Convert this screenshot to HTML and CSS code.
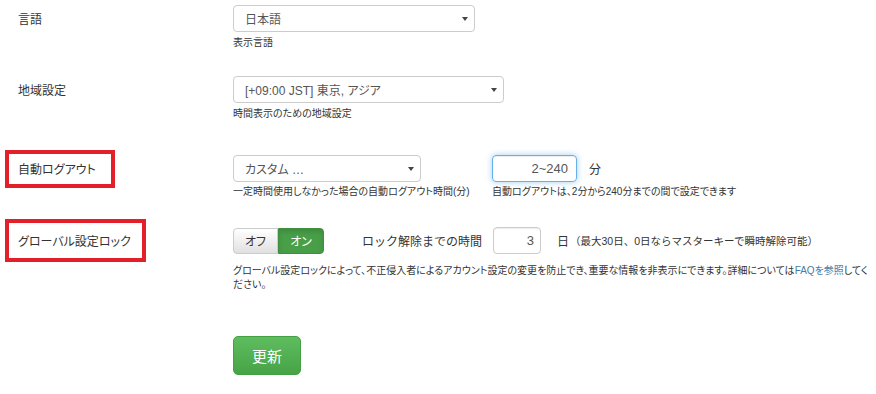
FILE: index.html
```html
<!DOCTYPE html>
<html lang="ja">
<head>
  <meta charset="UTF-8" />
  <meta name="viewport" content="width=device-width, initial-scale=1.0" />
  <title>設定</title>
  <link rel="stylesheet" href="styles.css">
</head>
<body>
  <div class="settings">
    <!-- 言語 -->
    <div class="row row-lang">
      <div class="label"><span>言語</span></div>
      <div class="field">
        <div class="select select-lang">日本語</div>
        <div class="help">表示言語</div>
      </div>
    </div>
    <!-- 地域設定 -->
    <div class="row row-region">
      <div class="label"><span>地域設定</span></div>
      <div class="field">
        <div class="select select-region">[+09:00 JST] 東京, アジア</div>
        <div class="help">時間表示のための地域設定</div>
      </div>
    </div>
    <!-- 自動ログアウト -->
    <div class="row row-logout">
      <div class="label"><span class="marked marked-logout">自動ログアウト</span></div>
      <div class="field field-split">
        <div class="col-select">
          <div class="select select-logout">カスタム …</div>
          <div class="help">一定時間使用しなかった場合の自動ログアウト時間(分)</div>
        </div>
        <div class="col-minutes">
          <div class="inline">
            <div class="input input-focus input-minutes">2~240</div>
            <span class="unit">分</span>
          </div>
          <div class="help">自動ログアウトは、2分から240分までの間で設定できます</div>
        </div>
      </div>
    </div>
    <!-- グローバル設定ロック -->
    <div class="row row-lock">
      <div class="label"><span class="marked marked-lock">グローバル設定ロック</span></div>
      <div class="field">
        <div class="inline">
          <div class="toggle">
            <button class="toggle-btn toggle-off">オフ</button>
            <button class="toggle-btn toggle-on">オン</button>
          </div>
          <span class="lock-label">ロック解除までの時間</span>
          <div class="input input-days">3</div>
          <span class="unit unit-days">日</span>
          <span class="note">（最大30日、0日ならマスターキーで瞬時解除可能）</span>
        </div>
        <p class="desc">グローバル設定ロックによって、不正侵入者によるアカウント設定の変更を防止でき、重要な情報を非表示にできます。詳細については<a href="#">FAQを参照</a>してください。</p>
      </div>
    </div>
    <div class="actions">
      <button class="btn-save">更新</button>
    </div>
  </div>
</body>
</html>
```

FILE: styles.css
```css
* {
  margin: 0;
  padding: 0;
  box-sizing: border-box;
}
body {
  font-family: "Liberation Sans", "Noto Sans CJK JP", sans-serif;
  font-feature-settings: "palt";
  color: #333;
  background: #fff;
  font-size: 12px;
}
.settings {
  padding-top: 5px;
}
/* Rows: label column + field column */
.row {
  display: grid;
  grid-template-columns: 233px 1fr;
}
.row-lang { margin-bottom: 26px; }
.row-region { margin-bottom: 34px; }
.row-logout { margin-bottom: 28px; }
.label {
  height: 27px;
  display: flex;
  align-items: center;
  padding-left: 18px;
  font-size: 12px;
}
/* Red highlight boxes */
.marked {
  display: flex;
  align-items: center;
  margin-left: -13px;
  padding: 0 11px 0 9px;
  border: 4px solid #e3202a;
  flex-shrink: 0;
}
.marked-logout {
  height: 38px;
  padding-right: 15px;
}
.marked-lock { height: 43px; }
/* Selects */
.select {
  height: 27px;
  border: 1px solid #ccc;
  border-radius: 4px;
  background: #fff;
  padding: 0 11px;
  display: flex;
  align-items: center;
  font-size: 12px;
  position: relative;
  color: #555;
}
.select::after {
  content: "";
  position: absolute;
  right: 6px;
  top: 11px;
  border-left: 3px solid transparent;
  border-right: 3px solid transparent;
  border-top: 4px solid #444;
}
.select-lang { width: 242px; }
.select-region { width: 271px; }
.select-logout { width: 188px; }
.help {
  font-size: 10px;
  line-height: 14px;
  margin-top: 4px;
}
.row-logout .help { margin-top: 3px; }
/* Split field for auto logout */
.field-split {
  display: flex;
}
.col-select {
  width: 259px;
}
.inline {
  display: flex;
  align-items: center;
  height: 27px;
}
/* Text inputs */
.input {
  height: 27px;
  border: 1px solid #ccc;
  border-radius: 4px;
  display: flex;
  align-items: center;
  justify-content: flex-end;
  font-size: 13px;
  color: #555;
  box-shadow: inset 0 1px 1px rgba(0,0,0,0.075);
}
.input-focus {
  border-color: #66afe9;
  box-shadow: inset 0 1px 1px rgba(0,0,0,0.075), 0 0 6px rgba(102,175,233,0.6);
}
.input-minutes {
  width: 85px;
  padding-right: 8px;
}
.input-days {
  width: 48px;
  padding-right: 6px;
  margin-left: 11px;
}
.unit {
  margin-left: 12px;
  font-size: 12px;
}
.unit-days {
  margin-left: 16px;
}
/* On / off toggle */
.toggle {
  display: flex;
  height: 26px;
}
.toggle-btn {
  font-family: inherit;
  font-feature-settings: "palt";
  font-size: 12px;
  height: 26px;
  border: 1px solid #ccc;
  cursor: pointer;
}
.toggle-off {
  width: 45px;
  background: linear-gradient(#fff, #e0e0e0);
  color: #333;
  border-radius: 4px 0 0 4px;
}
.toggle-on {
  width: 46px;
  background: #489f48;
  border-color: #3f8f3f;
  color: #fff;
  border-radius: 0 4px 4px 0;
  box-shadow: inset 0 3px 5px rgba(0,0,0,0.125);
}
.lock-label {
  margin-left: 38px;
  font-size: 12px;
  font-feature-settings: normal;
}
.note {
  margin-left: 1px;
  font-size: 10.5px;
  font-feature-settings: normal;
}
.desc {
  margin-top: 10px;
  font-size: 10px;
  line-height: 14px;
  padding-right: 4px;
}
.desc a {
  color: #4a7aa6;
  text-decoration: none;
}
/* Save button */
.actions {
  margin-top: 44px;
  padding-left: 233px;
}
.btn-save {
  width: 68px;
  height: 39px;
  border: 1px solid #43a043;
  border-radius: 5px;
  background: linear-gradient(#5fbd5f, #46a346);
  color: #fff;
  font-family: inherit;
  font-size: 15px;
  cursor: pointer;
}
```
